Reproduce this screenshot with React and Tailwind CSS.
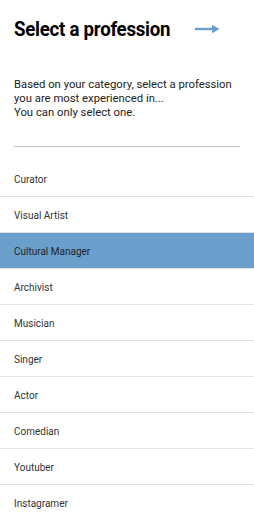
const PROFESSIONS = [
  "Curator",
  "Visual Artist",
  "Cultural Manager",
  "Archivist",
  "Musician",
  "Singer",
  "Actor",
  "Comedian",
  "Youtuber",
  "Instagramer",
];

export default function App() {
  const selected = "Cultural Manager";
  return (
    <div className="w-[254px] h-[512px] overflow-hidden bg-white font-['Roboto',sans-serif] text-[#222]">
      <div className="flex items-center justify-between pl-[14px] pr-[34px] pt-[16px]">
        <h1 className="text-[21px] leading-[26px] font-bold tracking-[-0.3px] text-black origin-left scale-x-[0.89] whitespace-nowrap">
          Select a profession
        </h1>
        <svg width="25" height="10" viewBox="0 0 25 10" className="shrink-0">
          <path d="M0 5h18" stroke="#6a9fcc" strokeWidth="2.4" />
          <path d="M17 0.8L24.5 5L17 9.2z" fill="#6a9fcc" />
        </svg>
      </div>
      <p className="mt-[36px] px-[14px] text-[11.3px] leading-[14px] text-[#222] whitespace-nowrap">
        Based on your category, select a profession
        <br />
        you are most experienced in...
        <br />
        You can only select one.
      </p>
      <div className="mx-[14px] mt-[26px] h-px bg-[#c4c4c4]" />
      <ul className="mt-[14px]">
        {PROFESSIONS.map((p) => (
          <li
            key={p}
            className={
              p === selected
                ? "h-[36px] flex items-center px-[14px] pt-[2px] text-[10px] bg-[#6a9fcc] text-[#222] border-b border-[#e4e4e4]"
                : "h-[36px] flex items-center px-[14px] pt-[2px] text-[10px] text-[#333] border-b border-[#e4e4e4]"
            }
          >
            {p}
          </li>
        ))}
      </ul>
    </div>
  );
}
